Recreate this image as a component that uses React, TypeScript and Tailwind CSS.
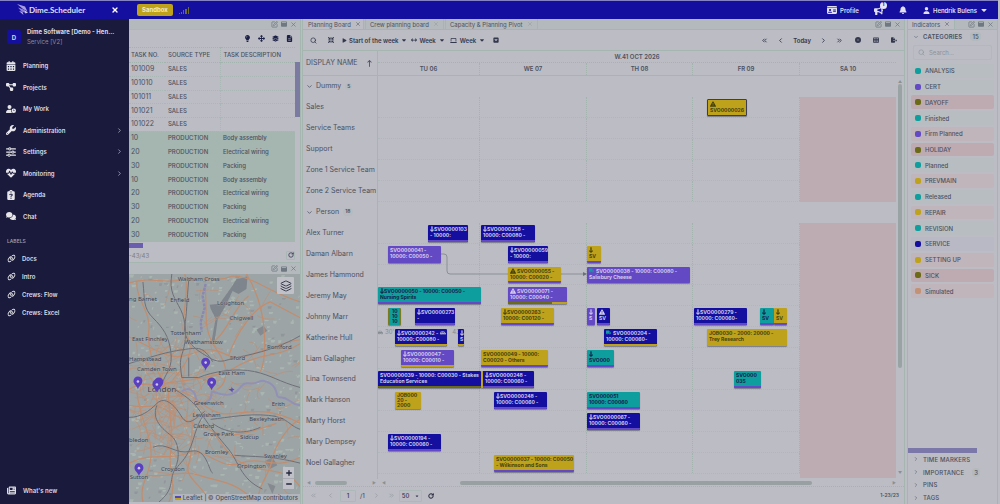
import React from "react";
import type { IconType } from "react-icons";
import {
  FaCalendarDays, FaDiagramProject, FaUserClock, FaWrench, FaSliders, FaHeartPulse, FaClipboardQuestion,
  FaComments, FaLink, FaNewspaper, FaIdCard, FaBullhorn, FaBell, FaUser, FaCaretDown, FaLightbulb,
  FaUpDownLeftRight, FaLayerGroup, FaFileLines, FaPlay, FaArrowsLeftRight, FaLaptop, FaSquareCaretDown,
  FaCircleMinus, FaTableCells, FaFileExport, FaArrowDownLong, FaTriangleExclamation, FaArrowUpLong,
  FaTruck, FaCarSide, FaWindowMaximize, FaMinimize,
} from "react-icons/fa6";
import {
  ChevronRight, ChevronDown, ChevronLeft, ChevronsLeft, ChevronsRight, X, Search, SquarePen, Layers,
  RotateCw, Plus, Minus,
} from "lucide-react";

const mainNav: { label: string; icon: IconType; more?: boolean }[] = [
  { label: "Planning", icon: FaCalendarDays },
  { label: "Projects", icon: FaDiagramProject },
  { label: "My Work", icon: FaUserClock },
  { label: "Administration", icon: FaWrench, more: true },
  { label: "Settings", icon: FaSliders, more: true },
  { label: "Monitoring", icon: FaHeartPulse, more: true },
  { label: "Agenda", icon: FaClipboardQuestion },
  { label: "Chat", icon: FaComments },
];

const labelLinks = ["Docs", "Intro", "Crews: Flow", "Crews: Excel"];

const tasks: [string, string, string][] = [
  ["101009", "SALES", ""],
  ["101010", "SALES", ""],
  ["101011", "SALES", ""],
  ["101021", "SALES", ""],
  ["101022", "SALES", ""],
  ["10", "PRODUCTION", "Body assembly"],
  ["20", "PRODUCTION", "Electrical wiring"],
  ["30", "PRODUCTION", "Packing"],
  ["10", "PRODUCTION", "Body assembly"],
  ["20", "PRODUCTION", "Electrical wiring"],
  ["30", "PRODUCTION", "Packing"],
  ["20", "PRODUCTION", "Electrical wiring"],
  ["30", "PRODUCTION", "Packing"],
];

type Tone = "navy" | "purple" | "teal" | "yellow";
type Mark = "down" | "warn" | "truck";
interface Job {
  at: number;
  len: number;
  tone: Tone;
  lines: string[];
  mark?: Mark;
  foot?: string;
  frame?: string;
}

const tones: Record<Tone, string> = {
  navy: "bg-[#150f9f] text-[#cfcde8]",
  purple: "bg-[#6449c4] text-[#d3cbec]",
  teal: "bg-[#0f9e9e] text-[#16214a]",
  yellow: "bg-[#bfa21b] text-[#45410e]",
};

const violet = "bg-[#6449c4]";
const gold = "bg-[#bfa21b]";
const olive = "bg-[#6b6a17]";

/* Horizontal unit: 1/518 of the visible time axis. */
const axis = 518;

const rows: { name: string; group?: number; jobs?: Job[] }[] = [
  { name: "Dummy", group: 5 },
  { name: "Sales", jobs: [{ at: 329, len: 40, tone: "yellow", mark: "warn", lines: ["", "SVO0000026"], frame: "border border-[#3d3c50]" }] },
  { name: "Service Teams" },
  { name: "Support" },
  { name: "Zone 1 Service Team" },
  { name: "Zone 2 Service Team" },
  { name: "Person", group: 18 },
  {
    name: "Alex Turner",
    jobs: [
      { at: 50, len: 40, tone: "navy", mark: "down", lines: ["SVO0000103", "- 10000:"], foot: violet },
      { at: 103, len: 54, tone: "navy", mark: "down", lines: ["SVO0000258 -", "10000: C00080 -"], foot: violet },
    ],
  },
  {
    name: "Daman Albarn",
    jobs: [
      { at: 10, len: 53, tone: "purple", lines: ["SVO0000041 -", "10000: C00050 -"] },
      { at: 130, len: 40, tone: "navy", mark: "down", lines: ["SVO0000059", "- 10000:"], foot: violet },
      { at: 209, len: 14, tone: "yellow", mark: "down", lines: ["", "SV"], foot: violet },
    ],
  },
  {
    name: "James Hammond",
    jobs: [
      { at: 130, len: 53, tone: "yellow", mark: "warn", lines: ["SVO0000055 -", "10000: C00020 -"], foot: violet },
      { at: 209, len: 103, tone: "purple", mark: "truck", lines: ["SVO0000038 - 10000: C00080 -", "Salisbury Cheese"] },
    ],
  },
  {
    name: "Jeremy May",
    jobs: [
      { at: 0, len: 103, tone: "teal", mark: "down", lines: ["SVO0000050 - 10000: C00050 -", "Nursing Spirits"], foot: violet },
      { at: 130, len: 59, tone: "purple", mark: "warn", lines: ["SVO0000071 -", "10000: C00040 -"], foot: "bg-linear-to-r from-[#6b6a17] from-75% to-[#bfa21b] to-75%" },
    ],
  },
  {
    name: "Johnny Marr",
    jobs: [
      { at: 10, len: 13, tone: "teal", lines: ["10", "10", "10"], frame: "border-x-2 border-[#7b7a20]" },
      { at: 37, len: 40, tone: "navy", mark: "down", lines: ["SVO0000273", "-"], foot: violet },
      { at: 123, len: 53, tone: "yellow", mark: "down", lines: ["SVO0000263 -", "10000: C00120 -"], foot: violet },
      { at: 209, len: 8, tone: "purple", mark: "down", lines: ["", "S"] },
      { at: 219, len: 13, tone: "navy", mark: "warn", lines: ["", "SV"], foot: violet },
      { at: 316, len: 53, tone: "navy", mark: "down", lines: ["SVO0000279 -", "10000: C00060-"], foot: violet },
      { at: 382, len: 14, tone: "teal", mark: "down", lines: ["", "SV"], foot: violet },
      { at: 396, len: 13, tone: "yellow", mark: "down", lines: ["", "SV"], foot: violet },
    ],
  },
  {
    name: "Katherine Hull",
    jobs: [
      { at: 17, len: 52, tone: "navy", mark: "down", lines: ["SVO0000242 -", "10000: C00080 -"], foot: gold },
      { at: 80, len: 6, tone: "navy", mark: "down", lines: ["", "S"], foot: gold },
      { at: 226, len: 53, tone: "navy", mark: "truck", lines: ["SVO0000204 -", "10000: C00060-"], foot: gold },
      { at: 329, len: 80, tone: "yellow", lines: ["JOB0030 - 2000: 20000 -", "Trey Research"] },
    ],
  },
  {
    name: "Liam Gallagher",
    jobs: [
      { at: 23, len: 53, tone: "purple", mark: "down", lines: ["SVO0000047 -", "10000: C00010 -"], foot: gold },
      { at: 103, len: 67, tone: "yellow", lines: ["SVO0000049 - 10000:", "C00020 - Others"], foot: violet },
      { at: 209, len: 27, tone: "teal", mark: "down", lines: ["", "SVO000"], foot: violet },
    ],
  },
  {
    name: "Lina Townsend",
    jobs: [
      { at: 0, len: 103, tone: "navy", lines: ["SVO0000039 - 10000: C00030 - Stakes", "Education Services"], foot: olive },
      { at: 103, len: 53, tone: "navy", mark: "down", lines: ["SVO0000248 -", "10000: C00060 -"], foot: violet, frame: "border-l-2 border-[#bfa21b]" },
      { at: 356, len: 27, tone: "teal", lines: ["SVO000", "035"], foot: violet },
    ],
  },
  {
    name: "Mark Hanson",
    jobs: [
      { at: 17, len: 26, tone: "yellow", lines: ["JOB000", "20 -", "2000"] },
      { at: 116, len: 53, tone: "navy", mark: "down", lines: ["SVO0000248 -", "10000: C00060 -"], foot: violet },
      { at: 209, len: 53, tone: "teal", lines: ["SVO000051", "10000: C00060"], foot: violet },
    ],
  },
  { name: "Marty Horst", jobs: [{ at: 209, len: 53, tone: "navy", mark: "down", lines: ["SVO0000067 -", "10000: C00060 -"], foot: violet }] },
  { name: "Mary Dempsey", jobs: [{ at: 10, len: 53, tone: "navy", mark: "down", lines: ["SVO0000194 -", "10000: C00060 -"], foot: violet }] },
  { name: "Noel Gallagher", jobs: [{ at: 116, len: 80, tone: "yellow", lines: ["SVO0000037 - 10000: C00050", "- Wilkinson and Sons"], foot: violet }] },
];

const pale = "bg-[#b8bdc1]";
const rose = "bg-[#beabb1]";
const blush = "bg-[#bfb5bb]";
const categories: [string, string, string][] = [
  ["ANALYSIS", "bg-[#0f9e9e]", pale],
  ["CERT", "bg-[#6449c4]", pale],
  ["DAYOFF", "bg-[#6b6a17]", rose],
  ["Finished", "bg-[#0f9e9e]", pale],
  ["Firm Planned", "bg-[#6449c4]", blush],
  ["HOLIDAY", "bg-[#6b6a17]", rose],
  ["Planned", "bg-[#0f9e9e]", pale],
  ["PREVMAIN", "bg-[#bfa21b]", blush],
  ["Released", "bg-[#0f9e9e]", pale],
  ["REPAIR", "bg-[#bfa21b]", blush],
  ["REVISION", "bg-[#0f9e9e]", pale],
  ["SERVICE", "bg-[#150f9f]", "bg-[#b8b9c4]"],
  ["SETTING UP", "bg-[#bfa21b]", blush],
  ["SICK", "bg-[#6b6a17]", rose],
  ["Simulated", "bg-[#c39276]", blush],
];

function WindowTools() {
  return (
    <div className="ml-auto flex items-center gap-[3px] pr-[3px] text-[#6f7880]">
      <button aria-label="Edit panel"><SquarePen size={7} strokeWidth={2.5} /></button>
      <button aria-label="Maximize panel"><FaWindowMaximize size={6} /></button>
      <button aria-label="Close panel"><X size={7} strokeWidth={2.5} /></button>
    </div>
  );
}

function Header() {
  return (
    <header className="mr-[2px] flex h-[19px] shrink-0 items-center border-t border-[#8583c4] bg-[#150f9f] pr-2.5 text-[6px] font-semibold text-[#e0dff2]">
      <div className="flex w-[129px] shrink-0 items-center pl-[17px]">
        <svg width="11" height="12" viewBox="0 0 22 24" aria-hidden="true">
          <path d="M0 0 L16 5 L21 15 L12 10 Z" fill="#a99be0" />
          <path d="M2 7 L13 11 L18 18 L9 15 Z" fill="#8d7fd6" />
          <path d="M4 14 L11 16 L13 22 Z" fill="#b9aee6" />
          <path d="M14 12 L22 17 L17 19 Z" fill="#d8d2f0" />
        </svg>
        <span className="ml-px font-['Lato'] text-[8px] font-bold">Dime.Scheduler</span>
        <button aria-label="Close menu" className="mr-2.5 ml-auto text-white"><X size={8} strokeWidth={4} /></button>
      </div>
      <button className="ml-2 h-[12px] rounded-[2px] bg-[#bfa21b] px-[5px] text-[6px] leading-[12px] font-bold text-[#f0ead0]">Sandbox</button>
      <svg className="ml-1.5" width="11" height="9" viewBox="0 0 11 9" aria-label="Signal strength" role="img">
        <path d="M0 7h1v1H0zM2 6h1v2H2zM4 4h1v4H4zM6 3h2v5H6zM9 1h1v7H9z" fill="#6f6a30" />
      </svg>
      <div className="ml-auto flex items-center">
        <a href="#profile" className="flex items-center gap-[3px]"><FaIdCard size={10} />Profile</a>
        <button aria-label="Announcements, 1 new" className="relative ml-[15px]">
          <FaBullhorn size={9} />
          <span className="absolute -top-[4px] -right-[4px] flex size-[7px] items-center justify-center rounded-full bg-[#e6e4f4] text-[5px] font-bold text-[#150f9f]">1</span>
        </button>
        <button aria-label="Notifications" className="ml-4"><FaBell size={8} /></button>
        <button className="ml-4 flex items-center gap-[3px]"><FaUser size={7} />Hendrik Bulens<FaCaretDown size={8} /></button>
      </div>
    </header>
  );
}

function Sidebar() {
  return (
    <aside className="flex w-[129px] shrink-0 flex-col bg-[#1a1a3d] text-[6px] font-semibold text-[#dcdce4]">
      <div className="flex h-9 items-center gap-[6px] px-[7px]">
        <span className="flex size-[14px] shrink-0 items-center justify-center rounded-[2px] bg-[#150f9f] text-[6px] font-bold">D</span>
        <div className="min-w-0 whitespace-nowrap">
          <div className="leading-[10px] font-bold">Dime Software [Demo - Hen...</div>
          <div className="leading-[10px] font-normal text-[#8c8c9e]">Service [V2]</div>
        </div>
      </div>
      <nav aria-label="Main" className="grid h-[172px] auto-rows-fr">
        {mainNav.map(({ label, icon: Icon, more }) => (
          <a key={label} href={"#" + label} className="flex items-center pr-1.5 pl-[6px]">
            <Icon size={10} className="mr-[7px] text-[#e6e6ea]" />
            {label}
            {more && <ChevronRight size={7} className="ml-auto" />}
          </a>
        ))}
      </nav>
      <h2 className="mt-2.5 pl-[7px] text-[5px] leading-[8px] font-medium text-[#a3a3b4]">LABELS</h2>
      <nav aria-label="Labels" className="mt-1 grid h-[73px] auto-rows-fr">
        {labelLinks.map((l) => (
          <a key={l} href={"#" + l} className="flex items-center gap-1.5 pl-[7px]">
            <FaLink size={9} className="-rotate-12 text-[#e6e6ea]" />{l}
          </a>
        ))}
      </nav>
      <a href="#new" className="mt-auto flex h-7 items-center gap-[7px] pl-[7px]"><FaNewspaper size={9} />What's new</a>
    </aside>
  );
}

const places: [number, number, string, "start" | "middle"][] = [
  [70, 7, "Waltham Cross", "middle"], [51, 28, "Enfield", "middle"], [0, 27, "ng Barnet", "start"],
  [102, 31, "Loughton", "middle"], [113, 46, "Chigwell", "middle"], [57, 61, "Tottenham", "middle"],
  [21, 67, "East Finchley", "middle"], [75, 70, "Walthamstow", "middle"], [151, 75, "Romford", "middle"],
  [0, 87, "Hampstead", "start"], [109, 86, "Ilford", "middle"], [28, 97, "Camden Town", "middle"],
  [103, 101, "East Ham", "middle"], [80, 132, "Greenwich", "middle"], [150, 133, "Erith", "middle"],
  [78, 144, "Lewisham", "middle"], [138, 148, "Bexleyheath", "middle"], [75, 155, "Catford", "middle"],
  [90, 163, "Grove Park", "middle"], [121, 166, "Sidcup", "middle"], [0, 169, "bledon", "start"],
  [88, 181, "Bromley", "middle"], [147, 185, "Swanley", "middle"], [123, 195, "Orpington", "middle"],
  [44, 198, "Croydon", "middle"], [10, 206, "Sutton", "middle"],
];

const pins = [[9, 116], [77, 97], [83, 117], [30, 117], [28, 119], [10, 203]];

/* Small repeatable generator for the minor street network. */
function streets(count: number, seed: number, cx: number, cy: number, spread: number) {
  let s = seed;
  const next = () => {
    s = (s * 16807) % 2147483647;
    return s / 2147483647;
  };
  let d = "";
  for (let i = 0; i < count; i++) {
    const x = cx + (next() + next() - 1) * spread;
    const y = cy + (next() + next() - 1) * spread * 1.2;
    const a = next() * 6.28;
    const n = 9 + next() * 16;
    const bend = (next() - 0.5) * 10;
    const dx = Math.cos(a) * n;
    const dy = Math.sin(a) * n;
    d += `M${x.toFixed(1)} ${y.toFixed(1)}q${(dx / 2 + bend).toFixed(1)} ${(dy / 2 - bend).toFixed(1)} ${dx.toFixed(1)} ${dy.toFixed(1)}`;
  }
  return d;
}

function specks(count: number, seed: number) {
  let s = seed;
  const next = () => {
    s = (s * 16807) % 2147483647;
    return s / 2147483647;
  };
  let d = "";
  for (let i = 0; i < count; i++) {
    const w = 1 + next() * 4;
    d += `M${(next() * 172).toFixed(1)} ${(next() * 230).toFixed(1)}h${w.toFixed(1)}l-1 ${(1 + next() * 2).toFixed(1)}h${(-w * 0.7).toFixed(1)}z`;
  }
  return d;
}

function LondonMap() {
  return (
    <div className="relative min-h-0 flex-1 overflow-hidden border-b-2 border-[#bbbcc4] bg-[#9da4a5]">
      <svg className="block size-full" viewBox="0 0 172 229" preserveAspectRatio="xMinYMin slice" role="img" aria-label="Map of London">
        <path d={specks(420, 77)} fill="#a9b5b0" />
        <path d={specks(100, 991)} fill="#90969a" />
        <path d="M103 13L108 5L119 3L118 15L110 20L104 17L97 32L89 46L86 68L83 67L87 45L82 35L81 31L91 30z" fill="#7f858c" />
        <path d="M136 188l8-4 5 8-8 4zM128 56l7-4 4 5-7 5zM139 210l8 3-3 8z" fill="#858a91" />
        <g fill="none" stroke="#bd8f73" strokeWidth="0.8">
          <path d={streets(120, 4242, 42, 118, 50)} opacity="0.9" />
          <path d={streets(110, 1311, 86, 115, 112)} opacity="0.8" />
          <path d={streets(50, 808, 30, 150, 40)} opacity="0.8" />
        </g>
        <g fill="none" stroke="#c18d6e" strokeWidth="1.2">
          <path d="M0 9C20 2 34 10 52 6S88 9 104 2M104 2C124 2 140 18 172 28M118 0C130 20 135 40 136 60S136 90 132 98" />
          <path d="M0 63C24 74 40 88 60 81S84 74 100 82 140 70 172 66M8 7C6 24 22 38 20 56S24 92 36 110" />
          <path d="M56 0C62 20 50 44 58 60S60 88 44 106M76 12C80 36 72 54 88 76S96 112 88 116M85 68C98 60 106 32 120 22" />
          <path d="M100 82C108 60 124 34 142 28L172 44M36 110C60 106 92 104 110 92S150 84 172 70" />
          <path d="M0 116C14 106 32 112 52 118S74 136 92 140 130 128 172 150M0 132C16 136 26 128 40 138S70 150 84 158 120 160 148 150" />
          <path d="M8 118C10 146 24 162 22 184S10 210 14 229M40 112C38 140 46 156 42 178S50 210 40 229" />
          <path d="M0 190C24 178 40 188 58 180S90 198 112 190 144 198 172 184M66 138C60 160 66 174 60 190S78 214 80 229" />
          <path d="M16 202C36 206 52 196 70 202S106 208 124 226M84 158C94 172 102 188 124 194S160 196 172 214M130 229C128 214 142 200 144 186S162 150 172 146" />
        </g>
        <g fill="none" stroke="#6d7079" strokeWidth="1">
          <path d="M14 8C16 26 14 34 24 44S40 62 42 78 38 98 34 108M43 0C40 18 46 24 52 36S58 66 54 78 52 94 53 104" />
          <path d="M60 6C58 28 58 40 56 52S64 74 74 80 88 90 100 86 140 80 172 62M0 90C20 84 38 78 54 76S74 72 84 88" />
          <path d="M60 84V103M53 104H70C84 98 108 94 126 98S150 108 172 114" />
          <path d="M46 116C60 124 68 132 74 142S90 164 100 176 112 206 134 216M0 144C12 144 20 138 28 130S46 132 52 142 62 150 76 138" />
          <path d="M28 132C22 146 34 156 42 162S52 184 46 196 46 216 30 229M76 140C66 154 66 166 60 178S50 190 46 198" />
          <path d="M82 146C100 144 120 140 140 142S160 152 172 156M84 150C100 162 118 160 132 154M106 182C124 184 142 182 172 190M24 174C38 168 46 182 62 178S80 198 84 200" />
        </g>
        <path d="M53 118C60 112 66 118 67 124S74 132 80 127 79 116 87 119 103 123 109 117 114 109 122 110 132 103 142 110 145 124 153 124 160 130 172 132" fill="none" stroke="#9191b6" strokeWidth="2" />
        <path d="M77 10L74 22 76 34 72 48 73 58" fill="none" stroke="#8987b4" strokeWidth="2.4" strokeDasharray="3 1" />
        <path d="M100 116l3-1 0-2 1 2 2 1-2 1 0 2-2-2z" fill="#5c4bb0" />
        <g className="font-['Noto_Sans']" fill="#3f4352" stroke="#a5acad" strokeWidth="0.6" paintOrder="stroke" fontSize="6">
          {places.map(([x, y, name, anchor]) => (
            <text key={name} x={x} y={y} textAnchor={anchor}>{name}</text>
          ))}
          <text x="33" y="119" fontSize="8" textAnchor="middle">London</text>
        </g>
        {pins.map(([x, y]) => (
          <g key={x + "-" + y} transform={`translate(${x} ${y})`}>
            <path d="M0 0C-1-4-4.500-5-4.500-8.500A4.500 4.500 0 0 1 4.500-8.500C4.500-5 1-4 0 0Z" fill="#5a3fc0" />
            <circle cy="-8" r="1.300" fill="#cfc9e6" />
          </g>
        ))}
      </svg>
      <button aria-label="Map layers" className="absolute top-[3px] right-[6px] flex size-[17px] items-center justify-center rounded-[1px] bg-[#bfc0c8] text-[#3a3d4c]"><Layers size={12} /></button>
      <div className="absolute right-[6px] bottom-[13px] flex flex-col bg-[#bfc0c8] text-[#23263a]">
        <button aria-label="Zoom in" className="flex h-[11px] w-[11px] items-center justify-center"><Plus size={8} strokeWidth={4} /></button>
        <button aria-label="Zoom out" className="flex h-[11px] w-[11px] items-center justify-center border-t border-[#a9aab2]"><Minus size={8} strokeWidth={4} /></button>
      </div>
      <div className="absolute right-0 bottom-0 flex items-center gap-[2px] bg-[#b2b5bb] px-[2px] text-[6px] leading-[8px] font-medium whitespace-nowrap text-[#4a4e5c]">
        <svg width="6" height="4" viewBox="0 0 6 4" aria-hidden="true"><path d="M0 0h6v2H0z" fill="#5346b8" /><path d="M0 2h6v2H0z" fill="#bfa21b" /></svg>
        <a href="#leaflet">Leaflet</a> | © <a href="#osm">OpenStreetMap</a> contributors
      </div>
    </div>
  );
}

function LeftColumn() {
  return (
    <section className="flex w-[172px] shrink-0 flex-col border-r border-[#a5b5b0]">
      <div className="flex h-[11px] items-center border-b border-[#adb8b8] bg-[#b3b9bd]"><WindowTools /></div>
      <div className="flex h-[17px] shrink-0 items-center justify-end gap-[7px] pr-[7px] text-[#1c1f45]">
        <button aria-label="Hints"><FaLightbulb size={7} /></button>
        <button aria-label="Move"><FaUpDownLeftRight size={7} /></button>
        <button aria-label="Layers"><FaLayerGroup size={7} /></button>
        <button aria-label="Export"><FaFileLines size={7} /></button>
      </div>
      <div className="flex">
        <table className="h-[195px] min-w-0 flex-1 table-fixed border-collapse text-left text-[6px] leading-[8px] font-medium text-[#4c5160]">
          <thead>
            <tr className="h-[15px] border-y border-dotted border-[#a3b3ae]">
              <th className="w-9 pl-[2px] font-medium whitespace-nowrap">TASK NO.</th>
              <th className="w-[55px] border-r border-dotted border-[#a3b3ae] pl-[3px] font-medium whitespace-nowrap">SOURCE TYPE</th>
              <th className="pl-[3px] font-medium whitespace-nowrap">TASK DESCRIPTION</th>
            </tr>
          </thead>
          <tbody>
            {tasks.map(([no, type, text], i) => (
              <tr key={i} className={type === "SALES" ? "border-b border-dotted border-[#a9b8b4]" : "border-b border-[#a5b5b0] bg-[#a5b5b0]"}>
                <td className="pl-[2px] text-[7px] font-normal">{no}</td>
                <td className={type === "SALES" ? "border-r border-dotted border-[#a9b8b4] pl-[3px]" : "pl-[3px]"}>{type}</td>
                <td className="pl-[3px] whitespace-nowrap">{text}</td>
              </tr>
            ))}
          </tbody>
        </table>
        <div className="w-[5px] shrink-0 pt-[15px]"><div className="h-[55px] bg-[#7b7aa0]" /></div>
      </div>
      <div className="mt-px h-[5px] w-[14px] shrink-0 bg-[#6a5fae]" />
      <div className="flex h-[15px] shrink-0 items-center justify-between border-b border-[#a5b5b0] pr-[5px] text-[6px] text-[#7a7f88]">
        -43/43
        <button aria-label="Refresh tasks" className="flex size-[9px] items-center justify-center rounded-[1px] border border-[#a9b8b4] text-[#30334a]"><RotateCw size={6} strokeWidth={3} /></button>
      </div>
      <div className="flex h-[11px] shrink-0 items-center bg-[#b3b9bd]"><WindowTools /></div>
      <LondonMap />
    </section>
  );
}

function MarkIcon({ mark }: { mark: Mark }) {
  if (mark === "down") return <FaArrowDownLong className="inline-block h-[6px] w-[4px] shrink-0 stroke-current stroke-[40px] align-top" />;
  if (mark === "warn") return <FaTriangleExclamation className="mr-px inline-block size-[6px] shrink-0 align-top" />;
  return <FaTruck className="mr-[2px] inline-block size-[5px] shrink-0 align-top text-[#129a9e]" />;
}

function JobBar({ job }: { job: Job }) {
  const tight = job.lines.length > 2;
  return (
    <div
      className={`absolute top-[2px] bottom-[2px] flex flex-col overflow-hidden rounded-[1px] shadow-[0_1px_1px_rgba(60,60,80,0.5)] ${tones[job.tone]} ${job.frame ?? ""}`}
      style={{ left: `${(job.at / axis) * 100}%`, width: `${(job.len / axis) * 100}%` }}
    >
      <div className={`min-h-0 flex-1 pt-[1px] text-[5px] font-bold whitespace-nowrap ${tight ? "pl-[2px] leading-[5px]" : "pl-[2px] leading-[6px]"}`}>
        {job.lines.map((line, i) => (
          <div key={i}>{i === 0 && job.mark && <MarkIcon mark={job.mark} />}{line}</div>
        ))}
      </div>
      {job.foot && <div className={`h-[2px] shrink-0 ${job.foot}`} />}
    </div>
  );
}

const dayGrid = "grid grid-cols-[102fr_107fr_106fr_107fr_96fr]";

function PlanningBoard() {
  return (
    <main className="flex min-w-0 flex-1 flex-col border-x border-[#a5b5b0] text-[#4c5160]">
      <div className="flex h-[11px] shrink-0 items-stretch border-b border-[#a5b5b0] bg-[#b3b9bd] text-[6px]">
        <button className="flex items-center gap-1 border-r border-[#a5b5b0] bg-[#bbbcc4] pr-[2px] pl-[5px]">Planning Board<X size={6} /></button>
        <button className="ml-px flex items-center gap-1 border-x border-[#a5b5b0] px-1">Crew planning board<X size={6} className="opacity-30" /></button>
        <button className="ml-px flex items-center gap-1 border-x border-[#a5b5b0] px-1">Capacity &amp; Planning Pivot<X size={6} className="opacity-30" /></button>
        <WindowTools />
      </div>
      <div className="flex h-[21px] shrink-0 items-center border-b border-[#a5b5b0] px-[7px] text-[6px] font-semibold text-[#33374c]">
        <button aria-label="Search"><Search size={7} strokeWidth={2.5} /></button>
        <button aria-label="Fit" className="ml-[11px]"><FaMinimize size={6} /></button>
        <button className="ml-2 flex items-center gap-[2px]"><FaPlay size={5} />Start of the week<FaCaretDown size={6} className="ml-px" /></button>
        <button className="ml-1 flex items-center gap-[2px]"><FaArrowsLeftRight size={6} />Week<FaCaretDown size={6} className="ml-px" /></button>
        <button className="ml-[5px] flex items-center gap-[3px]"><FaLaptop size={7} />Week<FaCaretDown size={6} /></button>
        <button aria-label="More views" className="ml-2"><FaSquareCaretDown size={6} /></button>
        <div className="ml-auto flex items-center gap-[9px]">
          <button aria-label="Back one page"><ChevronsLeft size={7} strokeWidth={3} /></button>
          <button aria-label="Back one day"><ChevronLeft size={7} strokeWidth={3} /></button>
          <button>Today</button>
          <button aria-label="Forward one day"><ChevronRight size={7} strokeWidth={3} /></button>
          <button aria-label="Forward one page"><ChevronsRight size={7} strokeWidth={3} /></button>
        </div>
        <div className="ml-3 flex items-center gap-3">
          <button aria-label="Hide"><FaCircleMinus size={6} /></button>
          <button aria-label="Grid"><FaTableCells size={6} /></button>
          <button aria-label="Export board"><FaFileExport size={6} /></button>
        </div>
      </div>

      <div className="flex h-[25px] shrink-0 border-b border-[#a5b5b0]">
        <div className="flex w-[75px] shrink-0 items-center justify-between border-r border-[#a5b5b0] pr-1 pl-[3px] text-[7px]">DISPLAY NAME<FaArrowUpLong size={7} /></div>
        <div className="flex min-w-0 flex-1 flex-col pr-2 text-center text-[6px] font-semibold">
          <div className="h-3 border-b border-dotted border-[#a3b3ae] leading-[12px]">W.41 OCT 2026</div>
          <div className={`${dayGrid} flex-1 divide-x divide-dotted divide-[#a3b3ae] leading-[12px]`}>
            {["TU 06", "WE 07", "TH 08", "FR 09", "SA 10"].map((d) => <div key={d}>{d}</div>)}
          </div>
        </div>
      </div>

      <div className="flex min-h-0 flex-1">
        <div className="grid w-[75px] shrink-0 auto-rows-fr border-r border-[#a5b5b0] pb-[5px] pl-[3px] text-[7px]">
          {rows.map((r) => (
            <div key={r.name} className="flex min-h-0 items-center whitespace-nowrap">
              {r.group ? (
                <button className="flex items-center gap-[3px]"><ChevronDown size={7} strokeWidth={2.5} />{r.name}<span className="ml-px rounded bg-[#b5bbbf] px-[2px] text-[5px] font-semibold">{r.group}</span></button>
              ) : r.name}
            </div>
          ))}
        </div>
        <div className="relative min-w-0 flex-1">
          <div className="absolute inset-0 grid auto-rows-fr pb-[5px]">
            {rows.map((r, i) => (
              <div key={r.name} className={`${dayGrid} min-h-0 ${r.group ? "" : "divide-x divide-dotted divide-[#a3b3ae] border-b border-dotted border-b-[#adb8b8]"}`}>
                <div /><div /><div /><div />
                <div className={r.group ? "" : i === rows.length - 1 ? "-mb-[5px] bg-[#bdacb2]" : "-mb-px bg-[#bdacb2]"} />
              </div>
            ))}
          </div>
          <svg className="absolute inset-0 size-full" viewBox="0 0 518 403" preserveAspectRatio="none" aria-hidden="true">
            <path d="M63 178H66Q69 178 69 181V195Q69 198 72 198H208" fill="none" stroke="#8b9095" />
            <path d="M205 196L209 198L205 200Z" fill="#6b7078" />
          </svg>
          <div className="absolute inset-0 grid auto-rows-fr pb-[5px]">
            {rows.map((r) => (
              <div key={r.name} className="relative min-h-0">
                {r.name === "Katherine Hull" && (
                  <div className="flex items-center pt-[2px] text-[6px] leading-[6px] text-[#858b92]">
                    <FaCarSide size={5} /><span className="ml-[2px]">30'</span><span className="ml-[58px]">43'</span>
                  </div>
                )}
                {r.jobs?.map((j) => <JobBar key={j.at} job={j} />)}
                {r.name === "Katherine Hull" && <FaCarSide size={6} className="absolute top-[3px] left-[12%] text-[#a9aabf]" />}
              </div>
            ))}
          </div>
        </div>
        <div className="flex w-2 shrink-0 flex-col items-center pt-1 pb-1">
          <span className="text-[4px] leading-[4px] text-[#8b9092]">▲</span>
          <div className="h-[284px] w-[4px] rounded-full bg-[#9aa3a4]" />
          <span className="mt-auto text-[4px] leading-[4px] text-[#8b9092]">▼</span>
        </div>
      </div>

      <div className="flex h-2 shrink-0 items-center border-b border-dotted border-[#a3b3ae] text-[4px] text-[#8b9092]">
        <div className="flex w-[75px] items-center pr-[2px] pl-1">◀<span className="ml-1 h-1 w-8 rounded-full bg-[#9aa3a4]" /><span className="ml-auto">▶</span></div>
        <div className="flex flex-1 items-center pl-1">◀<div className="mr-[80px] ml-[74px] h-1 flex-1 rounded-full bg-[#98a0a2]" /><span className="pr-2">▶</span></div>
      </div>
      <div className="flex h-[17px] shrink-0 items-center px-[7px] text-[6px] font-medium">
        <div className="flex items-center gap-2.5 text-[#8d949a]">
          <button aria-label="First page"><ChevronsLeft size={7} /></button>
          <button aria-label="Previous page"><ChevronLeft size={7} /></button>
        </div>
        <input aria-label="Page" defaultValue="1" className="ml-1.5 h-3 w-4 rounded-[1px] border border-[#adb8b8] text-center text-[6px] text-[#33374c]" />
        <span className="ml-1">/1</span>
        <div className="ml-2 flex items-center gap-2 text-[#8d949a]">
          <button aria-label="Next page"><ChevronRight size={7} /></button>
          <button aria-label="Last page"><ChevronsRight size={7} /></button>
        </div>
        <div className="ml-1 flex h-3 items-center rounded-[1px] border border-[#adb8b8] pr-[2px] pl-[2px] text-[#33374c]">
          <select aria-label="Rows per page" className="w-[13px] appearance-none text-[6px]"><option>50</option></select>
          <FaCaretDown size={4} />
        </div>
        <button aria-label="Refresh board" className="ml-[6px] text-[#23263a]"><RotateCw size={6} strokeWidth={4} /></button>
        <span className="mr-[-2px] ml-auto text-[5px] font-semibold">1-23/23</span>
      </div>
    </main>
  );
}

function Indicators() {
  return (
    <aside className="ml-[2px] flex w-[91px] shrink-0 flex-col border-x border-[#a5b5b0] text-[6px] text-[#4c5160]">
      <div className="flex h-[11px] shrink-0 items-stretch border-b border-[#a5b5b0] bg-[#b3b9bd]">
        <button className="flex items-center gap-1 border-r border-[#a5b5b0] bg-[#bbbcc4] px-1">Indicators<X size={6} /></button>
        <WindowTools />
      </div>
      <button className="flex h-[13px] shrink-0 items-center gap-1 pl-[5px] font-semibold tracking-wide">
        <ChevronDown size={6} />CATEGORIES<span className="ml-1 rounded bg-[#b3b9bd] px-[2px] font-medium">15</span>
      </button>
      <label className="mx-[5px] mt-[2px] flex h-[15px] shrink-0 items-center gap-1 rounded-[2px] border border-[#b1b9bc] pl-1 text-[#8b939a]">
        <Search size={7} /><span className="sr-only">Search categories</span>
        <input placeholder="Search..." className="w-14 placeholder:text-[#8b939a]" />
      </label>
      <ul className="mt-[3px] grid h-[236px] shrink-0 auto-rows-fr px-[3px]">
        {categories.map(([name, dot, tint]) => (
          <li key={name} className={`my-px flex min-h-0 items-center gap-1 rounded-[2px] pl-[4px] font-medium ${tint}`}>
            <span className={`size-[6px] rounded-[2px] ${dot}`} />{name}
          </li>
        ))}
      </ul>
      <div className="mt-auto h-[5px] w-[69px] shrink-0 bg-[#7b77a8]" />
      <div className="grid h-[51px] shrink-0 auto-rows-fr pl-[5px] font-medium tracking-wide">
        {["TIME MARKERS", "IMPORTANCE", "PINS", "TAGS"].map((t) => (
          <button key={t} className="flex items-center gap-1"><ChevronRight size={6} />{t}{t === "IMPORTANCE" && <span className="ml-1 rounded bg-[#b3b9bd] px-[2px]">3</span>}</button>
        ))}
      </div>
    </aside>
  );
}

export default function App() {
  return (
    <div className="flex h-screen flex-col overflow-hidden bg-[#bbbcc4] font-['Inter',sans-serif]">
      <Header />
      <div className="flex min-h-0 flex-1">
        <Sidebar />
        <LeftColumn />
        <div className="ml-px flex min-w-0 flex-1 pr-[2px]">
          <PlanningBoard />
          <Indicators />
        </div>
      </div>
    </div>
  );
}
